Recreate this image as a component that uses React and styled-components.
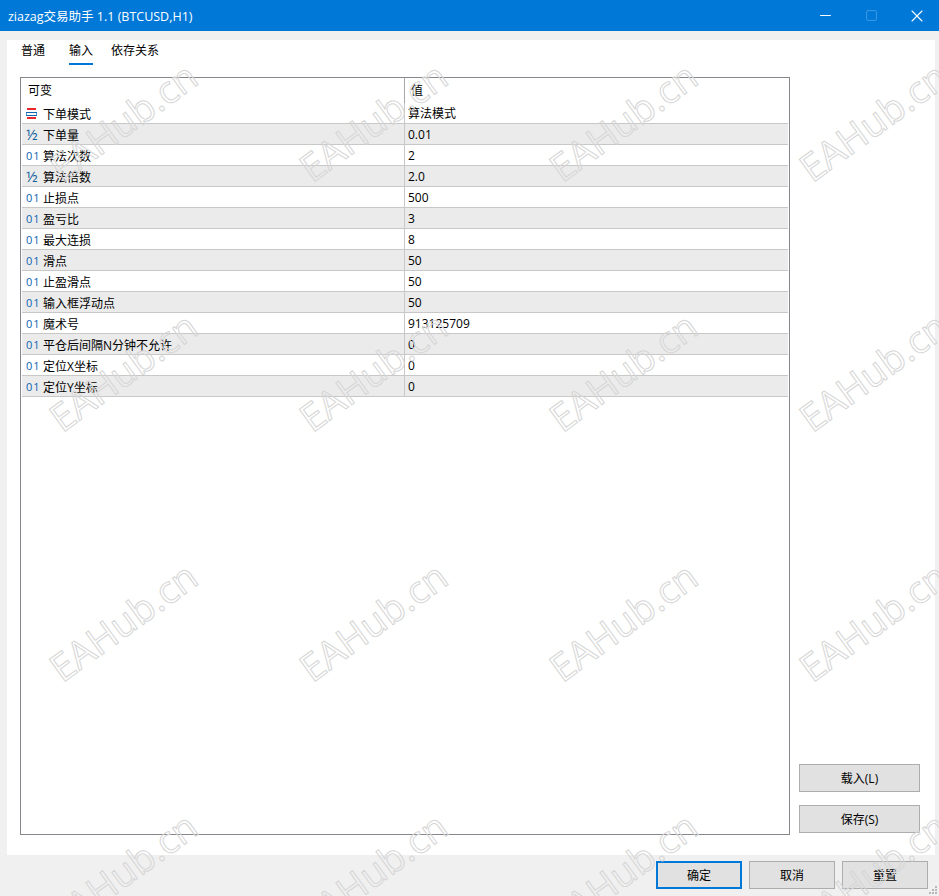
import styled, { createGlobalStyle } from 'styled-components'
import { Minus, Square, X } from 'lucide-react'

const TABS = [
  { label: '普通' },
  { label: '输入', active: true },
  { label: '依存关系' },
]

const PARAMS = [
  { type: 'enum', name: '下单模式', value: '算法模式' },
  { type: 'float', name: '下单量', value: '0.01' },
  { type: 'int', name: '算法次数', value: '2' },
  { type: 'float', name: '算法倍数', value: '2.0' },
  { type: 'int', name: '止损点', value: '500' },
  { type: 'int', name: '盈亏比', value: '3' },
  { type: 'int', name: '最大连损', value: '8' },
  { type: 'int', name: '滑点', value: '50' },
  { type: 'int', name: '止盈滑点', value: '50' },
  { type: 'int', name: '输入框浮动点', value: '50' },
  { type: 'int', name: '魔术号', value: '913125709' },
  { type: 'int', name: '平仓后间隔N分钟不允许', value: '0' },
  { type: 'int', name: '定位X坐标', value: '0' },
  { type: 'int', name: '定位Y坐标', value: '0' },
]

const MARKS = Array.from({ length: 16 }, (_, i) => i)

const TypeIcon = ({ type }) => {
  if (type === 'int') return <IntIcon>01</IntIcon>
  if (type === 'float') return <FloatIcon>½</FloatIcon>
  return (
    <svg width="12" height="11" viewBox="0 0 12 11">
      <rect x="1" y="0" width="9" height="2" fill="#e8262c" />
      <rect x="0" y="4" width="11" height="1" fill="#0f67b1" />
      <rect x="0" y="7" width="11" height="1" fill="#0f67b1" />
      <rect x="0" y="5" width="1" height="2" fill="#5a9bd0" />
      <rect x="10" y="5" width="1" height="2" fill="#5a9bd0" />
      <rect x="1" y="9" width="9" height="2" fill="#e8262c" />
    </svg>
  )
}

export default function App() {
  return (
    <>
      <GlobalStyle />
      <Window>
        <TitleBar>
          <Title>ziazag交易助手 1.1 (BTCUSD,H1)</Title>
          <WindowControls>
            <ControlButton><Minus size={17} strokeWidth={1.4} /></ControlButton>
            <ControlButton $disabled><Square size={13} strokeWidth={1.8} /></ControlButton>
            <ControlButton><X size={20} strokeWidth={1.3} /></ControlButton>
          </WindowControls>
        </TitleBar>
        <Panel>
          <Tabs>
            {TABS.map((tab) => (
              <Tab key={tab.label} $active={tab.active}>{tab.label}</Tab>
            ))}
          </Tabs>
          <Content>
            <Table>
              <HeaderRow>
                <HeaderName>可变</HeaderName>
                <HeaderValue>值</HeaderValue>
              </HeaderRow>
              {PARAMS.map((param, index) => (
                <Row key={param.name} $odd={index % 2 === 1}>
                  <NameCell>
                    <IconSlot><TypeIcon type={param.type} /></IconSlot>
                    {param.name}
                  </NameCell>
                  <ValueCell>{param.value}</ValueCell>
                </Row>
              ))}
            </Table>
            <SideActions>
              <Button $wide>载入(L)</Button>
              <Button $wide>保存(S)</Button>
            </SideActions>
          </Content>
        </Panel>
        <Footer>
          <Button $primary>确定</Button>
          <Button>取消</Button>
          <Button>重置</Button>
        </Footer>
        <Grip viewBox="0 0 9 9" width="9" height="9">
          <rect x="6" y="0" width="2" height="2" fill="#b8b8b8" />
          <rect x="3" y="3" width="2" height="2" fill="#b8b8b8" />
          <rect x="6" y="3" width="2" height="2" fill="#b8b8b8" />
          <rect x="0" y="6" width="2" height="2" fill="#b8b8b8" />
          <rect x="3" y="6" width="2" height="2" fill="#b8b8b8" />
          <rect x="6" y="6" width="2" height="2" fill="#b8b8b8" />
        </Grip>
        <Watermarks>
          {MARKS.map((mark) => (
            <MarkCell key={mark}><Mark>EAHub.cn</Mark></MarkCell>
          ))}
        </Watermarks>
      </Window>
    </>
  )
}

const GlobalStyle = createGlobalStyle`
  html, body {
    margin: 0;
    padding: 0;
    overflow: hidden;
  }

  body {
    font-family: 'Open Sans', 'Noto Sans CJK SC', sans-serif;
    font-size: 12px;
    color: #000;
  }
`

const Window = styled.div`
  position: relative;
  width: 939px;
  height: 896px;
  overflow: hidden;
  background: #f0f0f0;
  display: flex;
  flex-direction: column;
`

const TitleBar = styled.div`
  height: 31px;
  flex: none;
  background: #0078d7;
  display: flex;
  align-items: center;
  justify-content: space-between;
  padding-left: 8px;
`

const Title = styled.div`
  color: #fff;
  font-size: 12.5px;
`

const WindowControls = styled.div`
  display: flex;
  height: 100%;
  margin-right: -1px;
`

const ControlButton = styled.div`
  width: 46px;
  display: flex;
  align-items: center;
  justify-content: center;
  color: ${(p) => (p.$disabled ? '#3f9be6' : '#fff')};
`

const Panel = styled.div`
  margin: 9px 4px 0 7px;
  height: 815px;
  flex: none;
  background: #fff;
  display: flex;
  flex-direction: column;
`

const Tabs = styled.div`
  display: flex;
  gap: 18px;
  height: 25px;
  padding: 0 14px;
  flex: none;
`

const Tab = styled.div`
  height: 25px;
  box-sizing: border-box;
  line-height: 22px;
  border-bottom: 2px solid ${(p) => (p.$active ? '#0078d7' : 'transparent')};

  &:first-child {
    margin-right: 6px;
  }
`

const Content = styled.div`
  flex: 1;
  display: flex;
  padding: 12px 15px 20px 13px;
  min-height: 0;
`

const Table = styled.div`
  width: 770px;
  box-sizing: border-box;
  border: 1px solid #86868c;
  padding: 0 1px;
`

const HeaderRow = styled.div`
  display: grid;
  grid-template-columns: 383px 1fr;
  height: 25px;
`

const HeaderName = styled.div`
  padding-left: 6px;
  line-height: 26px;
  border-right: 1px solid #a8a8a8;
`

const HeaderValue = styled.div`
  padding-left: 6px;
  line-height: 26px;
`

const Row = styled.div`
  display: grid;
  grid-template-columns: 383px 1fr;
  height: 21px;
  box-sizing: border-box;
  background: ${(p) => (p.$odd ? '#ebebeb' : '#fff')};
  border-bottom: 1px solid #c8c8c8;
`

const NameCell = styled.div`
  display: flex;
  align-items: center;
  border-right: 1px solid #c8c8c8;
`

const ValueCell = styled.div`
  padding-left: 3px;
  line-height: 21px;
`

const IconSlot = styled.span`
  width: 21px;
  padding-left: 4px;
  box-sizing: border-box;
  display: flex;
  align-items: center;
  flex: none;
`

const IntIcon = styled.span`
  font-size: 11px;
  font-weight: 500;
  color: #0a64b4;
  letter-spacing: 1px;
`

const FloatIcon = styled.span`
  font-size: 15px;
  line-height: 15px;
  font-weight: 500;
  color: #0f5f9f;
`

const SideActions = styled.div`
  margin-left: 9px;
  align-self: flex-end;
  display: flex;
  flex-direction: column;
  gap: 13px;
  padding-bottom: 2px;
`

const Button = styled.div`
  width: ${(p) => (p.$wide ? '121px' : '86px')};
  height: 28px;
  box-sizing: border-box;
  background: #e1e1e1;
  border: ${(p) => (p.$primary ? '2px solid #0078d7' : '1px solid #adadad')};
  display: flex;
  align-items: center;
  justify-content: center;
`

const Footer = styled.div`
  flex: 1;
  display: flex;
  justify-content: flex-end;
  gap: 7px;
  padding: 6px 11px 0 0;
`

const Grip = styled.svg`
  position: absolute;
  right: 1px;
  bottom: 1px;
`

const Watermarks = styled.div`
  position: absolute;
  inset: -4px 0 0 -2px;
  pointer-events: none;
  display: grid;
  grid-template-columns: repeat(4, 250px);
  grid-auto-rows: 250px;
`

const MarkCell = styled.div`
  display: flex;
  align-items: center;
  justify-content: center;
`

const Mark = styled.div`
  font-family: 'Open Sans', sans-serif;
  font-size: 38px;
  color: transparent;
  -webkit-text-stroke: 1px #d6d6d6;
  transform: rotate(-36deg);
  white-space: nowrap;
`
